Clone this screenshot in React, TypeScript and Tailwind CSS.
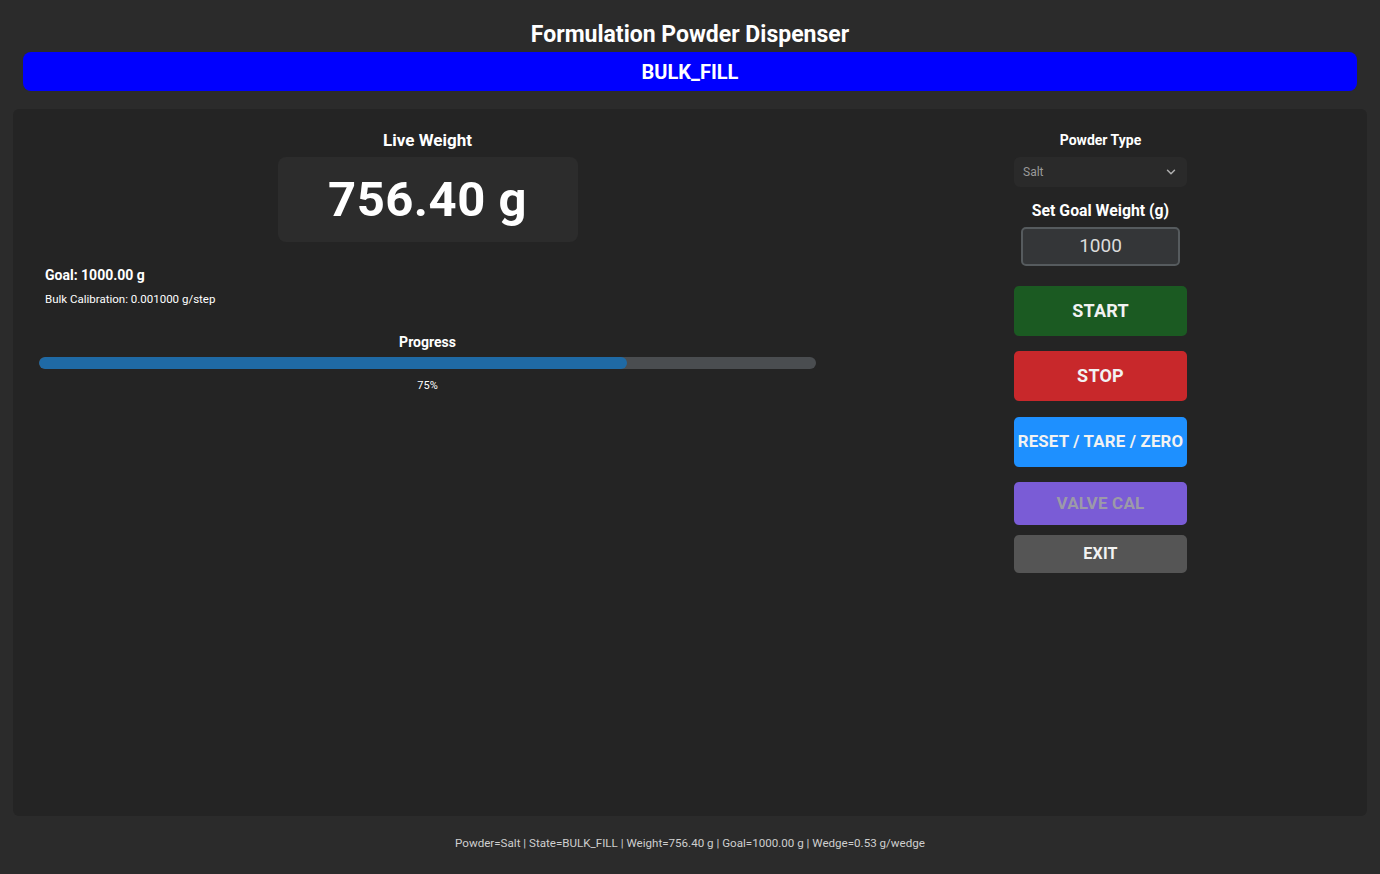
import { ChevronDown } from "lucide-react";

const weight = 756.4;
const goal = 1000;
const pct = weight / goal;

function ActionButton({
  label,
  className,
}: {
  label: string;
  className: string;
}) {
  return (
    <button
      className={`w-[173px] rounded-[5px] font-bold tracking-[0.2px] ${className}`}
    >
      {label}
    </button>
  );
}

export default function App() {
  return (
    <div className="w-[1380px] h-[874px] bg-[#2b2b2b] flex flex-col font-['Roboto',sans-serif] text-white overflow-hidden">
      {/* header */}
      <div className="flex flex-col items-center pt-[21px] px-[23px]">
        <h1 className="text-[23px] leading-[28px] font-bold">
          Formulation Powder Dispenser
        </h1>
        <div className="mt-[3px] w-full h-[39px] rounded-[8px] bg-[#0000ff] flex items-center justify-center text-[20px] font-bold">
          BULK_FILL
        </div>
      </div>

      {/* main panel */}
      <div className="mx-[13px] mt-[18px] h-[707px] rounded-[6px] bg-[#242424] flex">
        {/* left column */}
        <div className="w-[829px] px-[26px] pt-[21px] flex flex-col">
          <div className="flex flex-col items-center">
            <div className="text-[17px] leading-[20px] font-bold">Live Weight</div>
            <div className="mt-[7px] w-[300px] h-[85px] rounded-[8px] bg-[#2c2c2c] flex items-center justify-center text-[49px] font-bold tracking-[0.5px]">
              756.40 g
            </div>
          </div>

          <div className="mt-[25px] pl-[6px] text-[14px] leading-[16px] font-bold">
            Goal: 1000.00 g
          </div>
          <div className="mt-[9px] pl-[6px] text-[11.5px] leading-[14px]">
            Bulk Calibration: 0.001000 g/step
          </div>

          <div className="mt-[27px] text-center text-[14px] leading-[18px] font-bold">
            Progress
          </div>
          <div className="mt-[6px] h-[12px] w-full rounded-full bg-[#4a4d50] overflow-hidden">
            <div
              className="h-full rounded-full bg-[#1f6aa5]"
              style={{ width: `${pct * 100}%` }}
            />
          </div>
          <div className="mt-[10px] text-center text-[11px] leading-[14px]">
            {Math.floor(pct * 100)}%
          </div>
        </div>

        {/* right column */}
        <div className="flex-1 flex flex-col items-center pt-[22px] pr-[8px]">
          <div className="text-[14px] leading-[18px] font-bold">Powder Type</div>
          <div className="mt-[8px] w-[173px] h-[30px] rounded-[6px] bg-[#2a2a2a] flex items-center justify-between px-[9px] text-[12px] text-[#9a9a9a]">
            <span>Salt</span>
            <ChevronDown size={14} strokeWidth={2.5} className="text-[#b0b0b0]" />
          </div>
          <div className="mt-[15px] text-[15.8px] leading-[18px] font-bold">
            Set Goal Weight (g)
          </div>
          <div className="mt-[7px] w-[159px] h-[39px] rounded-[5px] bg-[#343638] border-2 border-[#565b5e] flex items-center justify-center text-[19px] text-[#dcdcdc]">
            1000
          </div>

          <div className="mt-[20px] flex flex-col items-center">
            <ActionButton label="START" className="h-[50px] pb-[2px] bg-[#1b5a22] text-[18px] text-[#f2f2f2]" />
            <ActionButton label="STOP" className="mt-[15px] h-[50px] pb-[2px] bg-[#c8282b] text-[18px] text-[#f2f2f2]" />
            <ActionButton label="RESET / TARE / ZERO" className="mt-[16px] h-[50px] bg-[#1e90ff] text-[16.8px] text-[#f2f2f2] whitespace-nowrap" />
            <ActionButton label="VALVE CAL" className="mt-[15px] h-[43px] bg-[#7a5cd6] text-[17px] text-[#9c9aa8]" />
            <ActionButton label="EXIT" className="mt-[10px] h-[38px] bg-[#555555] text-[16px] text-[#f2f2f2]" />
          </div>
        </div>
      </div>

      {/* status bar */}
      <div className="flex-1 flex items-center justify-center pb-[2px] text-[11.6px] text-[#cfcfcf]">
        Powder=Salt | State=BULK_FILL | Weight=756.40 g | Goal=1000.00 g | Wedge=0.53 g/wedge
      </div>
    </div>
  );
}
